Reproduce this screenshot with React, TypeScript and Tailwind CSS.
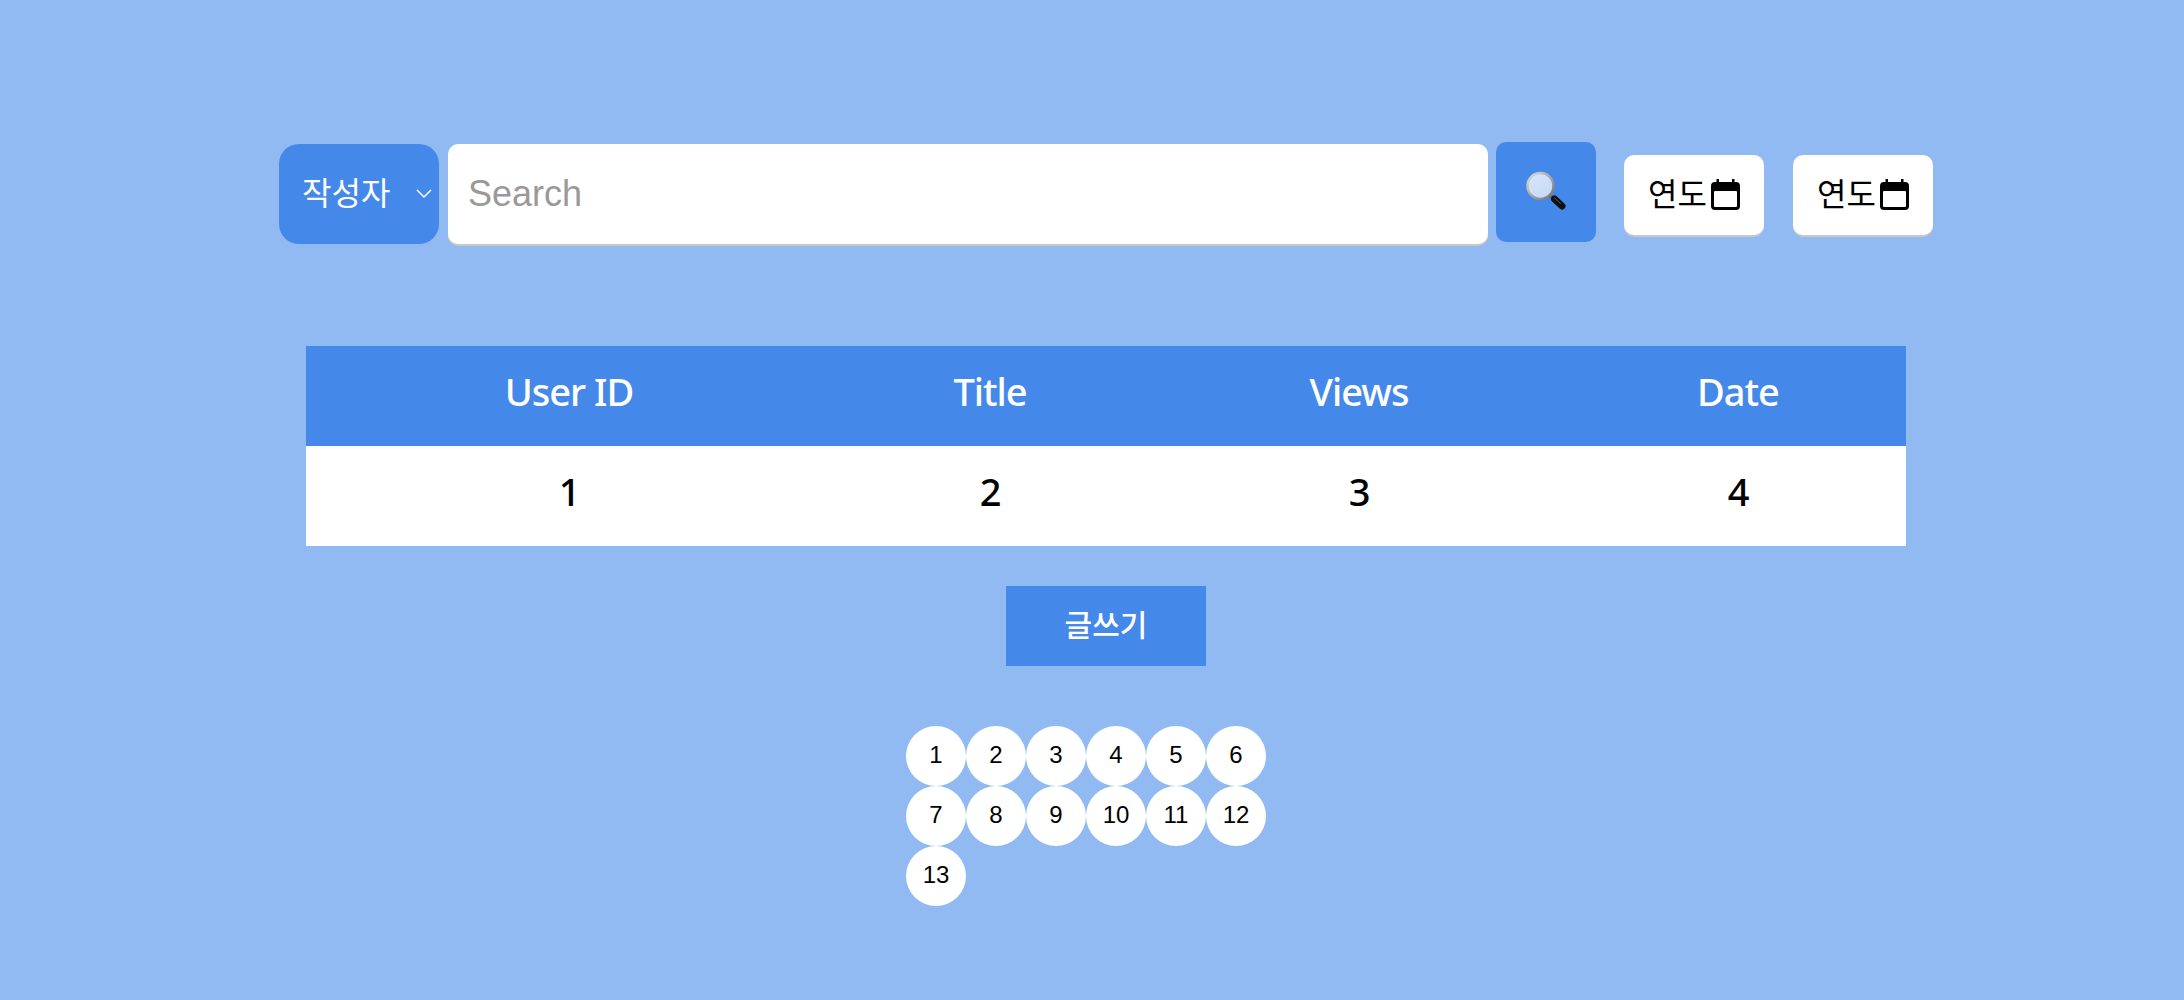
const SANS = "font-['Noto_Sans','Noto_Sans_CJK_KR',sans-serif]";

function Magnifier() {
  return (
    <svg className="-mt-[2px]" width="40" height="40" viewBox="0 0 40 40" aria-hidden="true">
      <defs>
        <linearGradient id="rim" x1="0" y1="0" x2="1" y2="1">
          <stop offset="0" stopColor="#e0e0e0" />
          <stop offset="1" stopColor="#707070" />
        </linearGradient>
        <linearGradient id="glass" x1="0" y1="0" x2="1" y2="1">
          <stop offset="0" stopColor="#dbe7fa" />
          <stop offset="1" stopColor="#c2d6f4" />
        </linearGradient>
      </defs>
      <line x1="23" y1="24" x2="28" y2="28" stroke="#6a6a6a" strokeWidth="3" />
      <line x1="28.500" y1="28" x2="36" y2="35" stroke="#111" strokeWidth="7" strokeLinecap="round" />
      <line x1="28.500" y1="27" x2="34.500" y2="32.500" stroke="#5a5a5a" strokeWidth="1" strokeLinecap="round" />
      <circle cx="14.500" cy="15" r="13" fill="url(#glass)" stroke="url(#rim)" strokeWidth="2.500" />
    </svg>
  );
}

function Calendar() {
  return (
    <svg className="-mt-[2px]" width="29" height="31" viewBox="0 0 29 31" aria-hidden="true">
      <path d="M5.500 0h2.500v3h13V0h2.500v3h1.500A4 4 0 0 1 29 7v20a4 4 0 0 1-4 4H4a4 4 0 0 1-4-4V7a4 4 0 0 1 4-4h1.500z" fill="#000" />
      <rect x="3" y="12" width="23" height="16" rx="1" fill="#fff" />
    </svg>
  );
}

function YearButton() {
  return (
    <button className={`mt-[13px] flex h-20 w-[140px] items-center justify-center gap-1 rounded-[10px] bg-white text-[32px] text-black shadow-[0_2px_0_#c8c8c8] ${SANS}`}>
      <span className="-mt-[3px]">연도</span>
      <Calendar />
    </button>
  );
}

const pages = [1, 2, 3, 4, 5, 6, 7, 8, 9, 10, 11, 12, 13];

export default function App() {
  return (
    <div className="min-h-screen bg-[#90baf1] pl-7 pt-[142px]">
      <div className="mx-auto w-[1654px]">
        <div className="flex items-start">
          <div className={`relative mt-[2px] flex h-[100px] w-40 items-center rounded-[20px] bg-[#4489ea] pb-[3px] pl-[23px] text-[32px] text-white ${SANS}`}>
            작성자
            <svg className="absolute right-[7px] top-[45px]" width="16" height="10" viewBox="0 0 16 10" fill="none" stroke="#fff" strokeWidth="1.500" aria-hidden="true">
              <path d="M1 1l7 7 7-7" />
            </svg>
          </div>
          <input
            placeholder="Search"
            className="ml-[9px] mt-[2px] h-[100px] w-[1040px] rounded-[10px] bg-white pb-[1px] pl-5 font-['Liberation_Sans',sans-serif] text-[36px] shadow-[0_2px_0_#c8c8c8] outline-none placeholder:text-[#999]"
          />
          <button className="ml-2 flex h-[100px] w-[100px] items-center justify-center rounded-[10px] bg-[#4489ea]">
            <Magnifier />
          </button>
          <div className="ml-7 flex gap-[29px]">
            <YearButton />
            <YearButton />
          </div>
        </div>

        <table className={`mx-auto mt-[102px] w-[1600px] table-fixed border-collapse text-center text-[38px] tracking-[-1px] ${SANS}`}>
          <colgroup>
            <col className="w-[526px]" />
            <col className="w-[316px]" />
            <col className="w-[422px]" />
            <col className="w-[336px]" />
          </colgroup>
          <thead>
            <tr className="h-[100px] bg-[#4489ea] text-white">
              <th className="pb-[9px] font-medium">User ID</th>
              <th className="pb-[9px] font-medium">Title</th>
              <th className="pb-[9px] font-medium">Views</th>
              <th className="pb-[9px] font-medium">Date</th>
            </tr>
          </thead>
          <tbody>
            <tr className="h-[100px] bg-white text-black">
              <td className="pb-[9px] font-medium">1</td>
              <td className="pb-[9px] font-medium">2</td>
              <td className="pb-[9px] font-medium">3</td>
              <td className="pb-[9px] font-medium">4</td>
            </tr>
          </tbody>
        </table>

        <button className={`mx-auto mt-10 block h-20 w-[200px] bg-[#4489ea] pb-[3px] text-[30px] font-medium text-white ${SANS}`}>
          글쓰기
        </button>

        <ul className="mx-auto mt-[60px] flex w-[400px] flex-wrap font-['Liberation_Sans',sans-serif] text-[24px] text-black">
          {pages.map((page) => (
            <li key={page} className="flex h-[60px] w-[60px] items-center justify-center rounded-full bg-white pb-[2px]">
              {page}
            </li>
          ))}
        </ul>
      </div>
    </div>
  );
}
